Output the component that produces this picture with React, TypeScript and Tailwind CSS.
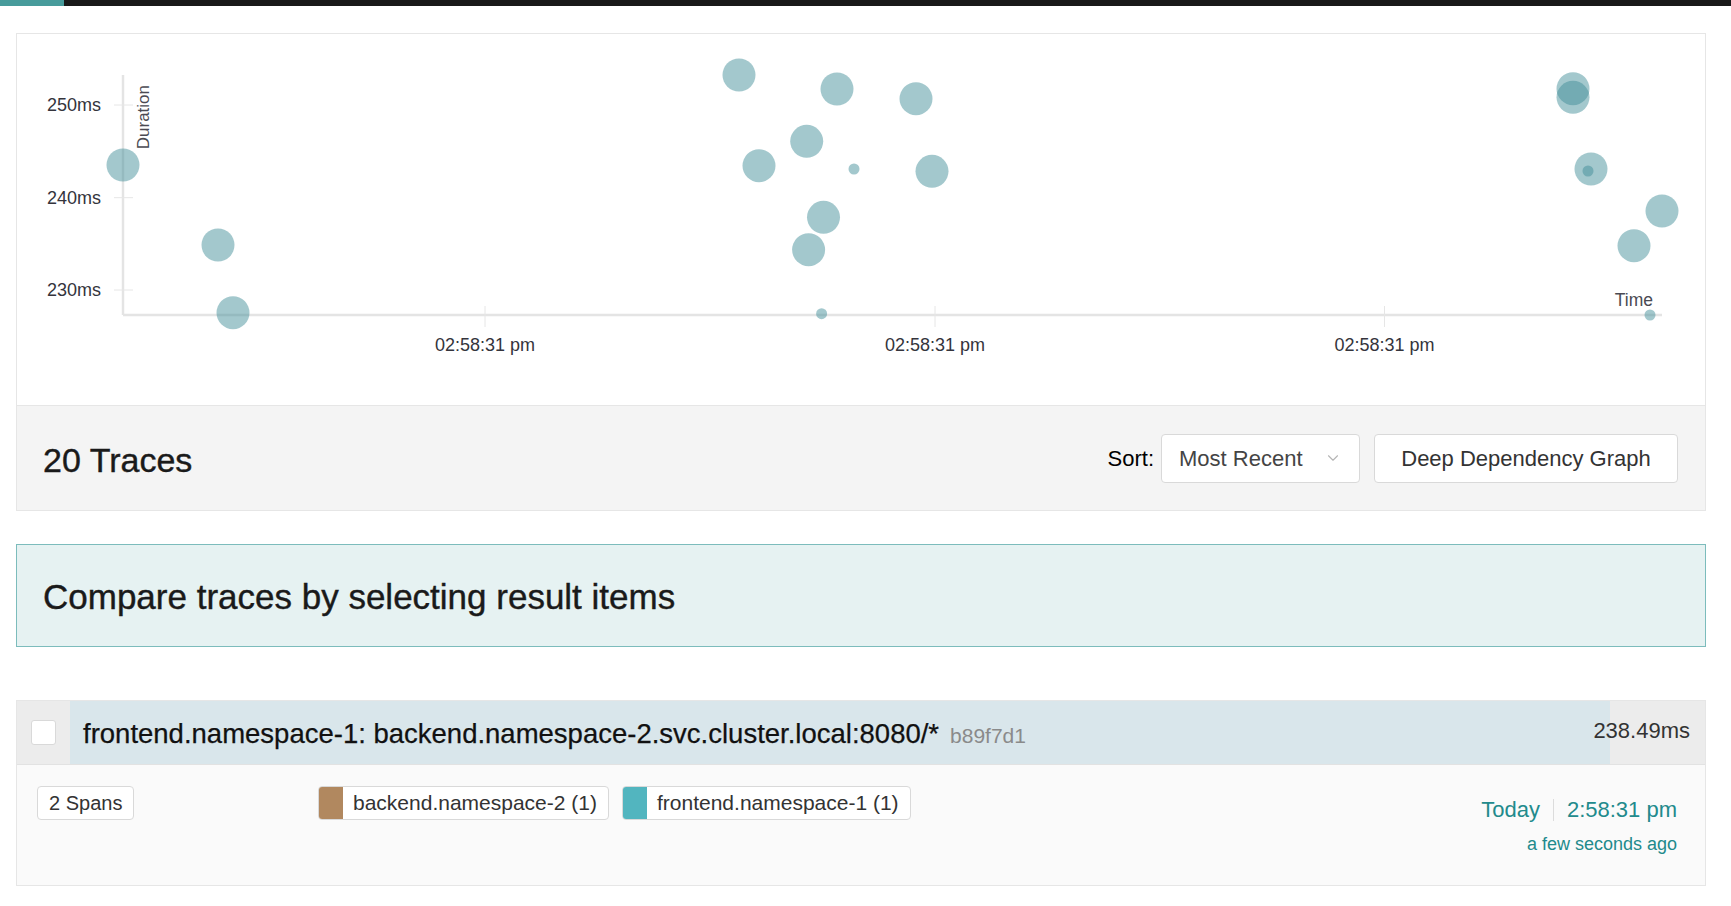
import { ChevronDown } from "lucide-react";

const dots: [number, number, number][] = [
  [106, 131, 16.5],
  [201, 211, 16.5],
  [216, 278.7, 16.5],
  [722, 41, 16.5],
  [820, 55, 16.5],
  [899, 64.7, 16.5],
  [789.7, 107.3, 16.5],
  [742, 131.7, 16.5],
  [837, 135, 5.5],
  [915, 137.3, 16.5],
  [806.5, 183.3, 16.5],
  [791.6, 215.7, 16.5],
  [804.6, 279.7, 5.5],
  [1556, 54.7, 16.5],
  [1556, 63.3, 16.5],
  [1574, 135, 16.5],
  [1571, 137, 5.5],
  [1645, 177, 16.5],
  [1617, 211.7, 16.5],
  [1633, 281, 5.5],
];

const yTicks = [
  { y: 71, label: "250ms" },
  { y: 163.7, label: "240ms" },
  { y: 256, label: "230ms" },
];

const xTicks = [468, 918, 1367.5];

function ScatterPlot() {
  return (
    <svg width="1688" height="371" className="block" style={{ fontFamily: '"Liberation Sans", Arial, sans-serif' }}>
      <line x1="106" y1="41" x2="106" y2="281" stroke="#e4e4e4" strokeWidth="2.5" />
      <line x1="106" y1="281" x2="1645" y2="281" stroke="#e4e4e4" strokeWidth="2.5" />
      {yTicks.map((t) => (
        <g key={t.label}>
          <line x1="97" y1={t.y} x2="116" y2={t.y} stroke="#e6e6e6" strokeWidth="1" />
          <text x="84" y={t.y + 1.5} textAnchor="end" dominantBaseline="middle" fontSize="18" fill="#34343c">
            {t.label}
          </text>
        </g>
      ))}
      {xTicks.map((x) => (
        <g key={x}>
          <line x1={x} y1="272" x2={x} y2="293" stroke="#e6e6e6" strokeWidth="1" />
          <text x={x} y="312.5" textAnchor="middle" dominantBaseline="middle" fontSize="18" fill="#34343c">
            02:58:31 pm
          </text>
        </g>
      ))}
      <text transform="translate(132,51) rotate(-90)" textAnchor="end" fontSize="17" fill="#4a4a52">
        Duration
      </text>
      <text x="1636" y="272" textAnchor="end" fontSize="17.5" fill="#4a4a52">
        Time
      </text>
      {dots.map(([cx, cy, r], i) => (
        <circle key={i} cx={cx} cy={cy} r={r} fill="#3f8d96" fillOpacity="0.48" />
      ))}
    </svg>
  );
}

function ServiceTag({ name, color }: { name: string; color: string }) {
  return (
    <div className="flex h-[34px] items-stretch rounded-[4px] border border-[#d9d9d9] bg-white">
      <div className="w-[24px] rounded-l-[3px]" style={{ backgroundColor: color }} />
      <span className="flex items-center pl-[10px] pr-[11px] text-[21px] text-[#333]">{name}</span>
    </div>
  );
}

export default function App() {
  return (
    <div className="min-h-screen bg-white text-[#222]" style={{ fontFamily: '"Liberation Sans", Arial, sans-serif' }}>
      <div className="flex h-[6px] bg-[#191919]">
        <div className="w-[64px] bg-[#479b9b]" />
      </div>

      <div className="ml-[16px] mr-[25px]">
        <div className="mt-[27px] border border-[#e6e6e6]">
          <ScatterPlot />
          <div className="flex h-[105px] items-center border-t border-[#e6e6e6] bg-[#f4f4f4] pl-[26px] pr-[27px]">
            <h2 className="mt-[4px] text-[34px] font-medium text-[#1a1a1a] [-webkit-text-stroke:0.4px_#1a1a1a]">20 Traces</h2>
            <div className="ml-auto flex items-center">
              <span className="mr-[7px] text-[22px] text-black">Sort:</span>
              <div className="flex h-[49px] w-[199px] items-center rounded-[4px] border border-[#d9d9d9] bg-white pl-[17px] pr-[17px]">
                <span className="text-[22px] text-[#444]">Most Recent</span>
                <ChevronDown className="ml-auto h-[18px] w-[18px] text-[#b5b5b5]" strokeWidth={1.5} />
              </div>
              <button className="ml-[14px] h-[49px] w-[304px] rounded-[4px] border border-[#d9d9d9] bg-white text-[22px] text-[#333]">
                Deep Dependency Graph
              </button>
            </div>
          </div>
        </div>

        <div className="mt-[33px] flex h-[103px] items-center border border-[#7cbcbc] bg-[#e6f2f2] px-[26px]">
          <h2 className="mt-[4px] text-[35px] font-medium text-[#1a1a1a] [-webkit-text-stroke:0.4px_#1a1a1a]">
            Compare traces by selecting result items
          </h2>
        </div>

        <div className="mt-[53px] border border-[#e6e6e6]">
          <div className="flex h-[64px] border-b border-[#e2e2e2] bg-[#ececec]">
            <div className="flex w-[53px] shrink-0 items-center pl-[14px]">
              <div className="h-[25px] w-[25px] rounded-[3px] border border-[#d9d9d9] bg-white" />
            </div>
            <div className="relative flex flex-1 items-center">
              <div className="absolute inset-y-0 left-0 w-[94.2%] bg-[#d9e6eb]" />
              <div className="relative mt-[2px] flex items-baseline pl-[13px]">
                <span className="text-[27.5px] text-[#111] [-webkit-text-stroke:0.25px_#111]">
                  frontend.namespace-1: backend.namespace-2.svc.cluster.local:8080/*
                </span>
                <span className="ml-[11px] text-[21px] text-[#8a8a8a]">b89f7d1</span>
              </div>
              <span className="relative ml-auto mb-[4px] pr-[15px] text-[22px] text-[#333]">238.49ms</span>
            </div>
          </div>
          <div className="flex h-[120px] items-start bg-[#fafafa] pl-[20px] pr-[28px] pt-[21px]">
            <div className="w-[281px] shrink-0">
              <div className="inline-flex h-[34px] items-center rounded-[4px] border border-[#d9d9d9] bg-white px-[11px] text-[20px] text-[#333]">
                2 Spans
              </div>
            </div>
            <div className="flex gap-[13px]">
              <ServiceTag name="backend.namespace-2 (1)" color="#b1885f" />
              <ServiceTag name="frontend.namespace-1 (1)" color="#52b5bf" />
            </div>
            <div className="ml-auto flex flex-col items-end text-[#228a8c]">
              <div className="mt-[7px] flex items-center text-[22px]">
                <span>Today</span>
                <span className="mx-[13px] h-[22px] w-px bg-[#dcdcdc]" />
                <span>2:58:31 pm</span>
              </div>
              <span className="mt-[5px] text-[18px]">a few seconds ago</span>
            </div>
          </div>
        </div>
      </div>
    </div>
  );
}
